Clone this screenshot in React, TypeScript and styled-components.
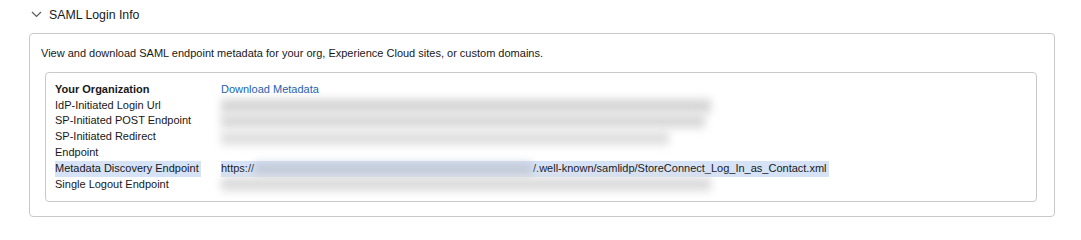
import React from "react";
import styled, { createGlobalStyle } from "styled-components";

const Global = createGlobalStyle`
  html, body { margin: 0; padding: 0; background: #ffffff; }
  body { font-family: "Liberation Sans", Arial, sans-serif; color: #181818; }
`;

const Section = styled.section`
  padding: 0 26px 0 29px;
  width: 1081px;
  box-sizing: border-box;
`;

const Header = styled.div`
  display: flex;
  align-items: center;
  gap: 7px;
  height: 29px;
  padding-left: 2px;
  margin-bottom: 4px;
`;

const Title = styled.h3`
  margin: 0;
  font-size: 12.3px;
  font-weight: 400;
  color: #181818;
`;

const OuterBox = styled.div`
  border: 1px solid #c9c9c9;
  border-radius: 4px;
  padding: 11px 17px 14px 11px;
`;

const Description = styled.p`
  margin: 0 0 11px 0;
  font-size: 11px;
  line-height: 16px;
`;

const InnerBox = styled.div`
  margin-left: 4px;
  border: 1px solid #c9c9c9;
  border-radius: 4px;
  padding: 9px 9px 9px 9px;
`;

const Grid = styled.div`
  display: grid;
  grid-template-columns: 146px 1fr;
  column-gap: 20px;
  font-size: 11px;
  line-height: 15.7px;
`;

const Label = styled.div<{ $bold?: boolean; $selected?: boolean }>`
  font-weight: ${(p) => (p.$bold ? 700 : 400)};
  background: ${(p) => (p.$selected ? "#d6e2f6" : "transparent")};
`;

const Value = styled.div<{ $top?: boolean }>`
  min-height: 15.7px;
  display: flex;
  align-items: ${(p) => (p.$top ? "flex-start" : "center")};
  padding-top: ${(p) => (p.$top ? "2px" : "0")};
`;

const Link = styled.a`
  color: #1b62ad;
  text-decoration: none;
`;

const Blur = styled.span<{ $w: number; $tone?: string }>`
  display: block;
  width: ${(p) => p.$w}px;
  height: 14px;
  background: ${(p) => p.$tone || "#d3d3d3"};
  filter: blur(4px);
`;

const Selected = styled.span`
  display: inline-flex;
  align-items: center;
  background: #d6e2f6;
  height: 16px;
  padding-right: 2px;
  white-space: nowrap;
`;

const InlineBlur = styled.span`
  display: inline-block;
  width: 277px;
  height: 12px;
  margin: 0 1px 0 1px;
  background: #c3c9d6;
  filter: blur(4px);
`;

const Chevron = () => (
  <svg width="11" height="7" viewBox="0 0 11 7" fill="none">
    <path d="M1 1 L5.5 5.5 L10 1" stroke="#5c5c5c" strokeWidth="1.2" />
  </svg>
);

export default function App() {
  return (
    <>
      <Global />
      <Section>
        <Header>
          <Chevron />
          <Title>SAML Login Info</Title>
        </Header>
        <OuterBox>
          <Description>
            View and download SAML endpoint metadata for your org, Experience Cloud sites, or custom domains.
          </Description>
          <InnerBox>
            <Grid>
              <Label $bold>Your Organization</Label>
              <Value>
                <Link href="#">Download Metadata</Link>
              </Value>
              <Label>IdP-Initiated Login Url</Label>
              <Value>
                <Blur $w={490} $tone="#d6d6d6" />
              </Value>
              <Label>SP-Initiated POST Endpoint</Label>
              <Value>
                <Blur $w={484} $tone="#d9d9d9" />
              </Value>
              <Label>SP-Initiated Redirect Endpoint</Label>
              <Value $top>
                <Blur $w={448} $tone="#e0e0e0" />
              </Value>
              <Label $selected>Metadata Discovery Endpoint</Label>
              <Value>
                <Selected>
                  https://
                  <InlineBlur />
                  /.well-known/samlidp/StoreConnect_Log_In_as_Contact.xml
                </Selected>
              </Value>
              <Label>Single Logout Endpoint</Label>
              <Value>
                <Blur $w={490} $tone="#dcdcdc" />
              </Value>
            </Grid>
          </InnerBox>
        </OuterBox>
      </Section>
    </>
  );
}
